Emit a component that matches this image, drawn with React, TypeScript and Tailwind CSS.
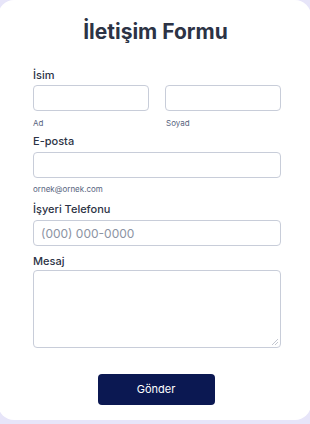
import React from "react";

export default function App() {
  return (
    <div className="w-[310px] h-[424px] overflow-hidden bg-[#e7e5f9]" style={{ fontFamily: "Inter, 'Noto Sans', sans-serif" }}>
      <div className="-ml-[2px] w-[313px] h-[420px] bg-white rounded-[16px] flex flex-col">
        <h1 className="mt-[20px] text-center text-[21px] leading-[24px] font-bold text-[#2c3345] pl-[2px]">İletişim Formu</h1>
        <div className="ml-[35px] w-[248px] flex flex-col">
          <label className="mt-[24px] text-[11px] leading-[14px] font-medium text-[#2c3345]">İsim</label>
          <div className="mt-[3px] flex gap-[16px]">
            <div className="flex-1 flex flex-col">
              <input className="h-[26px] w-full rounded-[4px] border border-[#c8cdd9] bg-white outline-none" />
              <span className="mt-[7px] text-[8px] leading-[10px] text-[#57647e]">Ad</span>
            </div>
            <div className="flex-1 flex flex-col">
              <input className="h-[26px] w-full rounded-[4px] border border-[#c8cdd9] bg-white outline-none" />
              <span className="mt-[7px] ml-[1px] text-[8px] leading-[10px] text-[#57647e]">Soyad</span>
            </div>
          </div>
          <label className="mt-[6px] text-[11px] leading-[14px] font-medium text-[#2c3345]">E-posta</label>
          <input className="mt-[4px] h-[26px] w-full rounded-[4px] border border-[#c8cdd9] bg-white outline-none" />
          <span className="mt-[6px] text-[8px] leading-[10px] text-[#57647e]">ornek@ornek.com</span>
          <label className="mt-[8px] text-[11px] leading-[14px] font-medium text-[#2c3345]">İşyeri Telefonu</label>
          <input
            placeholder="(000) 000-0000"
            className="mt-[4px] h-[26px] w-full rounded-[4px] border border-[#c8cdd9] bg-white px-[7px] text-[12px] text-[#2c3345] placeholder:text-[#8c93a3] outline-none"
          />
          <label className="mt-[8px] text-[11px] leading-[14px] font-medium text-[#2c3345]">Mesaj</label>
          <div className="relative mt-[2px]">
            <textarea className="block h-[78px] w-full resize-none rounded-[4px] border border-[#c8cdd9] bg-white outline-none" />
            <svg className="absolute right-[3px] bottom-[3px]" width="6" height="6" viewBox="0 0 6 6">
              <path d="M6 0 L0 6 M6 3 L3 6" stroke="#c3c7d0" strokeWidth="1" />
            </svg>
          </div>
          <div className="mt-[26px] flex justify-center">
            <button className="w-[117px] h-[31px] rounded-[4px] bg-[#0b1852] text-white text-[11px] -ml-[2px]">Gönder</button>
          </div>
        </div>
      </div>
    </div>
  );
}
